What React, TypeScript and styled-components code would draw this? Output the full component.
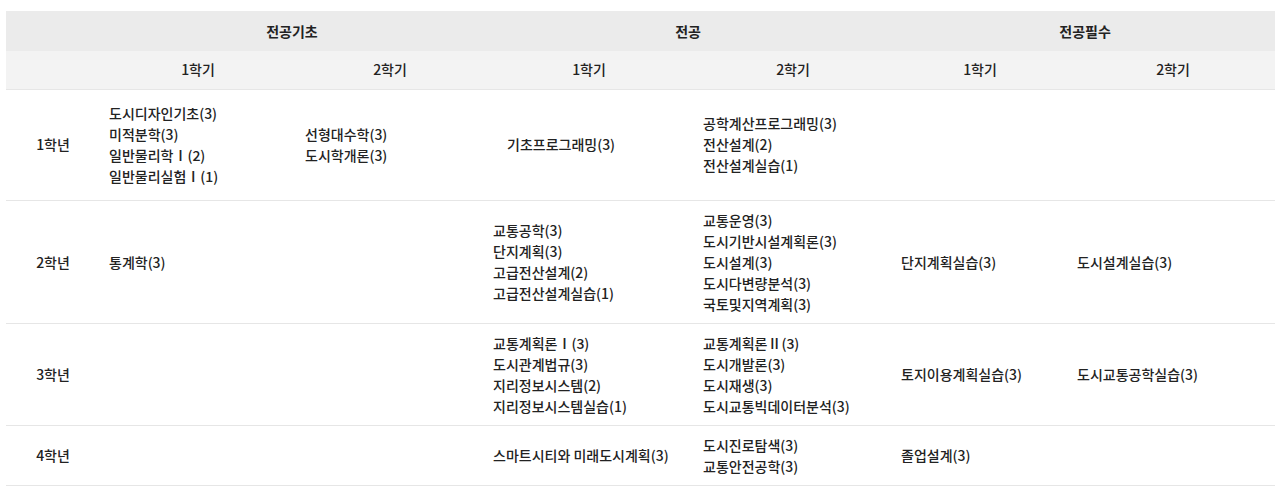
import styled, { createGlobalStyle } from 'styled-components';

type Row = {
  year: string;
  courses: string[][];
  roomy?: boolean;
  indent?: number[];
};

const COL_WIDTHS = [91, 196, 188, 210, 198, 176, 210];

const GROUPS = [
  { label: '전공기초', span: 2 },
  { label: '전공', span: 2 },
  { label: '전공필수', span: 2 },
];

const TERMS = ['1학기', '2학기', '1학기', '2학기', '1학기', '2학기'];

const ROWS: Row[] = [
  {
    year: '1학년',
    roomy: true,
    indent: [2],
    courses: [
      ['도시디자인기초(3)', '미적분학(3)', '일반물리학Ⅰ(2)', '일반물리실험Ⅰ(1)'],
      ['선형대수학(3)', '도시학개론(3)'],
      ['기초프로그래밍(3)'],
      ['공학계산프로그래밍(3)', '전산설계(2)', '전산설계실습(1)'],
      [],
      [],
    ],
  },
  {
    year: '2학년',
    courses: [
      ['통계학(3)'],
      [],
      ['교통공학(3)', '단지계획(3)', '고급전산설계(2)', '고급전산설계실습(1)'],
      ['교통운영(3)', '도시기반시설계획론(3)', '도시설계(3)', '도시다변량분석(3)', '국토및지역계획(3)'],
      ['단지계획실습(3)'],
      ['도시설계실습(3)'],
    ],
  },
  {
    year: '3학년',
    courses: [
      [],
      [],
      ['교통계획론Ⅰ(3)', '도시관계법규(3)', '지리정보시스템(2)', '지리정보시스템실습(1)'],
      ['교통계획론Ⅱ(3)', '도시개발론(3)', '도시재생(3)', '도시교통빅데이터분석(3)'],
      ['토지이용계획실습(3)'],
      ['도시교통공학실습(3)'],
    ],
  },
  {
    year: '4학년',
    courses: [
      [],
      [],
      ['스마트시티와 미래도시계획(3)'],
      ['도시진로탐색(3)', '교통안전공학(3)'],
      ['졸업설계(3)'],
      [],
    ],
  },
];

const GlobalStyle = createGlobalStyle`
  body {
    margin: 0;
    background: #ffffff;
    font-family: 'Noto Sans CJK KR', 'Noto Sans', sans-serif;
    color: #222222;
  }
`;

export default function App() {
  return (
    <>
      <GlobalStyle />
      <Page>
        <Table>
          <colgroup>
            {COL_WIDTHS.map((w, i) => (
              <col key={i} style={{ width: w }} />
            ))}
          </colgroup>
          <thead>
            <GroupRow>
              <HeadCell />
              {GROUPS.map((g) => (
                <HeadCell key={g.label} colSpan={g.span}>
                  {g.label}
                </HeadCell>
              ))}
            </GroupRow>
            <TermRow>
              <HeadCell />
              {TERMS.map((t, i) => (
                <HeadCell key={i}>{t}</HeadCell>
              ))}
            </TermRow>
          </thead>
          <tbody>
            {ROWS.map((row) => (
              <BodyRow key={row.year} $roomy={row.roomy}>
                <YearCell>{row.year}</YearCell>
                {row.courses.map((list, i) => (
                  <CourseCell key={i} $indent={row.indent?.includes(i)}>
                    {list.map((c) => (
                      <Course key={c}>{c}</Course>
                    ))}
                  </CourseCell>
                ))}
              </BodyRow>
            ))}
          </tbody>
        </Table>
      </Page>
    </>
  );
}

const Page = styled.div`
  padding: 11px 5px 0 6px;
`;

const Table = styled.table`
  width: 1269px;
  table-layout: fixed;
  border-collapse: collapse;
  font-size: 14px;
  line-height: 21px;
  font-weight: 500;
`;

const HeadCell = styled.th`
  font-weight: 500;
  text-align: center;
  padding: 0 0 0 6px;
`;

const GroupRow = styled.tr`
  height: 40px;
  background: #ebebeb;

  & > th {
    font-weight: 700;
  }
`;

const TermRow = styled.tr`
  height: 38px;
  background: #f3f3f3;
  border-bottom: 1px solid #e6e6e6;
`;

const BodyRow = styled.tr<{ $roomy?: boolean }>`
  border-bottom: 1px solid #e6e6e6;

  & > td {
    padding-top: ${(p) => (p.$roomy ? 13 : 9)}px;
    padding-bottom: ${(p) => (p.$roomy ? 13 : 8)}px;
  }
`;

const YearCell = styled.td`
  text-align: center;
  vertical-align: middle;
  padding-left: 4px;
`;

const CourseCell = styled.td<{ $indent?: boolean }>`
  vertical-align: middle;
  text-align: left;
  padding-left: ${(p) => (p.$indent ? 26 : 12)}px;
  padding-right: 4px;
`;

const Course = styled.div`
  white-space: nowrap;
`;
